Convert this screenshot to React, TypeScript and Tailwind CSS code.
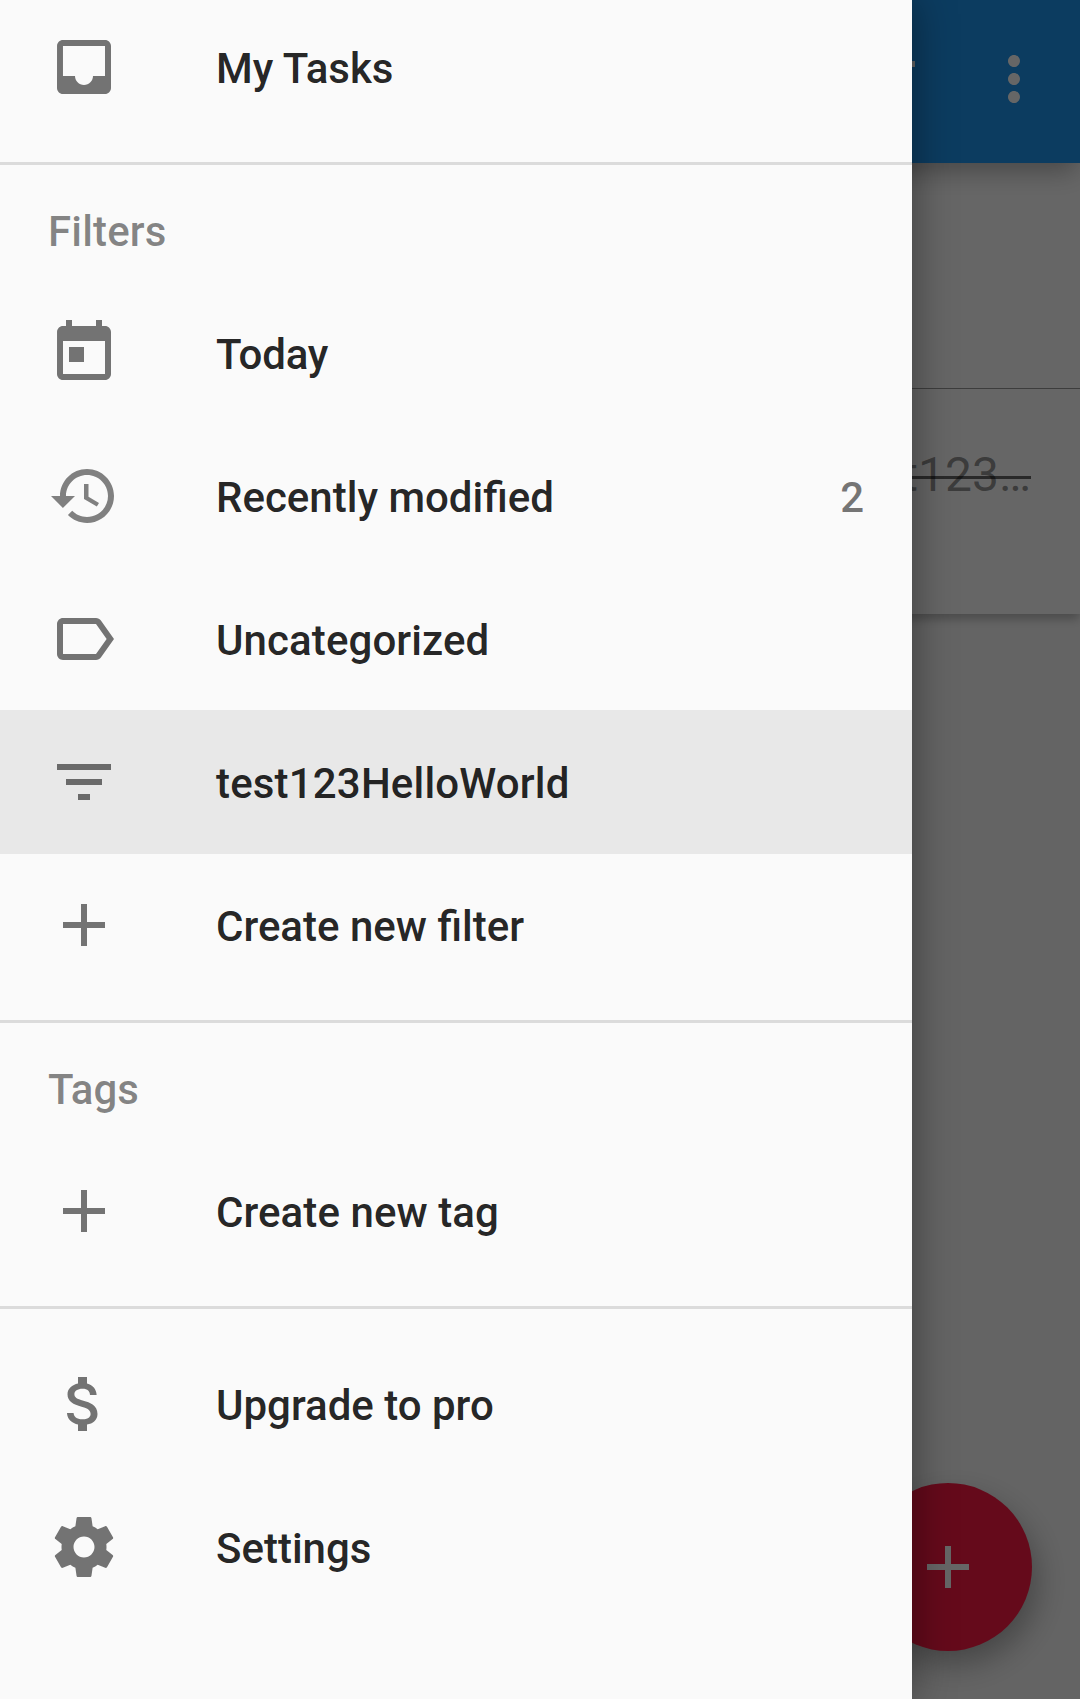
import React from "react";

const icons = {
  inbox:
    "M19 3H4.99c-1.11 0-1.98.9-1.98 2L3 19c0 1.1.88 2 1.99 2H19c1.1 0 2-.9 2-2V5c0-1.1-.9-2-2-2zm0 12h-4c0 1.66-1.35 3-3 3s-3-1.34-3-3H4.99V5H19v10z",
  today:
    "M19 3h-1V1h-2v2H8V1H6v2H5c-1.11 0-1.99.9-1.99 2L3 19c0 1.1.89 2 2 2h14c1.1 0 2-.9 2-2V5c0-1.1-.9-2-2-2zm0 16H5V8h14v11zM7 10h5v5H7z",
  history:
    "M13 3c-4.97 0-9 4.03-9 9H1l3.89 3.89.07.14L9 12H6c0-3.87 3.13-7 7-7s7 3.13 7 7-3.13 7-7 7c-1.93 0-3.68-.79-4.94-2.06l-1.42 1.42C8.27 19.99 10.51 21 13 21c4.97 0 9-4.03 9-9s-4.03-9-9-9zm-1 5v5l4.28 2.54.72-1.21-3.5-2.08V8H12z",
  label:
    "M17.63 5.84C17.27 5.33 16.67 5 16 5L5 5.01C3.9 5.01 3 5.9 3 7v10c0 1.1.9 1.99 2 1.99L16 19c.67 0 1.27-.33 1.63-.84L22 12l-4.37-6.16zM16 17H5V7h11l3.55 5L16 17z",
  filter: "M10 18h4v-2h-4v2zM3 6v2h18V6H3zm3 7h12v-2H6v2z",
  plus: "M19 13h-6v6h-2v-6H5v-2h6V5h2v6h6v2z",
  money:
    "M11.8 10.9c-2.27-.59-3-1.2-3-2.15 0-1.09 1.01-1.85 2.7-1.85 1.78 0 2.44.85 2.5 2.1h2.21c-.07-1.72-1.12-3.3-3.21-3.81V3h-3v2.16c-1.94.42-3.5 1.68-3.5 3.61 0 2.31 1.91 3.46 4.7 4.13 2.5.6 3 1.48 3 2.41 0 .69-.49 1.79-2.7 1.79-2.06 0-2.87-.92-2.98-2.1h-2.2c.12 2.19 1.76 3.42 3.68 3.83V21h3v-2.15c1.95-.37 3.5-1.5 3.5-3.55 0-2.84-2.43-3.81-4.7-4.4z",
  settings:
    "M19.43 12.98c.04-.32.07-.64.07-.98s-.03-.66-.07-.98l2.11-1.65c.19-.15.24-.42.12-.64l-2-3.46c-.12-.22-.39-.3-.61-.22l-2.49 1c-.52-.4-1.08-.73-1.69-.98l-.38-2.65C14.46 2.18 14.25 2 14 2h-4c-.25 0-.46.18-.49.42l-.38 2.65c-.61.25-1.17.59-1.69.98l-2.49-1c-.23-.09-.49 0-.61.22l-2 3.46c-.13.22-.07.49.12.64l2.11 1.65c-.04.32-.07.65-.07.98s.03.66.07.98l-2.11 1.65c-.19.15-.24.42-.12.64l2 3.46c.12.22.39.3.61.22l2.49-1c.52.4 1.08.73 1.69.98l.38 2.65c.03.24.24.42.49.42h4c.25 0 .46-.18.49-.42l.38-2.65c.61-.25 1.17-.59 1.69-.98l2.49 1c.23.09.49 0 .61-.22l2-3.46c.12-.22.07-.49-.12-.64l-2.11-1.65zM12 15.5c-1.93 0-3.5-1.57-3.5-3.5s1.57-3.5 3.5-3.5 3.5 1.57 3.5 3.5-1.57 3.5-3.5 3.5z",
  more: "M12 8c1.1 0 2-.9 2-2s-.9-2-2-2-2 .9-2 2 .9 2 2 2zm0 2c-1.1 0-2 .9-2 2s.9 2 2 2 2-.9 2-2-.9-2-2-2zm0 6c-1.1 0-2 .9-2 2s.9 2 2 2 2-.9 2-2-.9-2-2-2z",
};

function Icon({ name, className = "" }: { name: keyof typeof icons; className?: string }) {
  return (
    <svg viewBox="0 0 24 24" className={`size-[72px] shrink-0 fill-current ${className}`}>
      <path d={icons[name]} />
    </svg>
  );
}

interface RowProps {
  icon: keyof typeof icons;
  label: string;
  count?: number;
  selected?: boolean;
  iconClass?: string;
  labelClass?: string;
}

function Row({ icon, label, count, selected, iconClass = "text-black/54", labelClass = "" }: RowProps) {
  return (
    <div
      className={`flex shrink-0 items-start px-12 pt-9 ${selected ? "-mb-px h-36 bg-[#e8e8e8]" : "h-[143px]"}`}
    >
      <Icon name={icon} className={iconClass} />
      <span className={`ml-24 flex-1 pt-0.5 leading-[72px] text-black/87 ${labelClass}`}>{label}</span>
      {count !== undefined && <span className="pt-0.5 leading-[72px] text-black/54">{count}</span>}
    </div>
  );
}

function Divider() {
  return <div className="mt-6 h-[3px] shrink-0 bg-[#dbdbdb]" />;
}

function Header({ children }: { children: React.ReactNode }) {
  return <div className="h-[116px] shrink-0 px-12 pt-[31px] leading-[72px] text-black/48">{children}</div>;
}

export default function App() {
  return (
    <div className="relative h-[1699px] w-[1080px] overflow-hidden bg-[#fafafa] font-[Roboto,sans-serif]">
      {/* Task list behind the drawer */}
      <div className="flex h-full flex-col">
        <header className="relative z-10 flex h-[163px] shrink-0 items-start justify-end bg-[#1e96f0] pt-[43px] pr-[30px] text-white shadow-[0_12px_24px_-4px_rgba(0,0,0,0.3)]">
          <div className="mt-[18px] mr-[63px] h-1.5 w-[54px] bg-white" />
          <Icon name="more" />
        </header>
        <div className="h-[451px] shrink-0 bg-white shadow-[0_6px_9px_-1px_rgba(0,0,0,0.25)]">
          <div className="h-[226px] border-b border-black/40" />
          <div className="flex justify-end pt-12 pr-[49px] text-[48px] leading-[76px] text-black/42">
            <span className="relative">
              t123…
              <span className="absolute right-0 top-[39px] h-[3px] w-40 bg-black/60" />
            </span>
          </div>
        </div>
      </div>
      <div className="absolute right-12 bottom-12 flex size-[168px] items-center justify-center rounded-full bg-[#fd1a44] text-white shadow-[6px_14px_32px_-2px_rgba(0,0,0,0.32)]">
        <Icon name="plus" />
      </div>

      {/* Scrim */}
      <div className="absolute inset-0 z-20 bg-black/60" />

      {/* Navigation drawer */}
      <nav className="absolute inset-y-0 left-0 z-30 flex w-[912px] flex-col bg-[#fafafa] text-[42px] font-medium shadow-[0_0_40px_rgba(0,0,0,0.42)]">
        <div className="-mt-[5px] flex flex-col">
          <Row icon="inbox" label="My Tasks" />
          <Divider />
          <Header>
            <span className="tracking-[0.15px]">Filters</span>
          </Header>
          <Row icon="today" label="Today" labelClass="tracking-[-0.2px]" />
          <Row icon="history" label="Recently modified" count={2} iconClass="text-[#808080]" />
          <Row icon="label" label="Uncategorized" labelClass="tracking-[0.1px]" />
          <Row icon="filter" label="test123HelloWorld" labelClass="tracking-[0.17px]" selected />
          <Row icon="plus" label="Create new filter" />
          <Divider />
          <Header>Tags</Header>
          <Row icon="plus" label="Create new tag" labelClass="tracking-[0.08px]" />
          <Divider />
          <div className="pt-[23px]">
            <Row icon="money" label="Upgrade to pro" />
            <Row icon="settings" label="Settings" />
          </div>
        </div>
      </nav>
    </div>
  );
}
